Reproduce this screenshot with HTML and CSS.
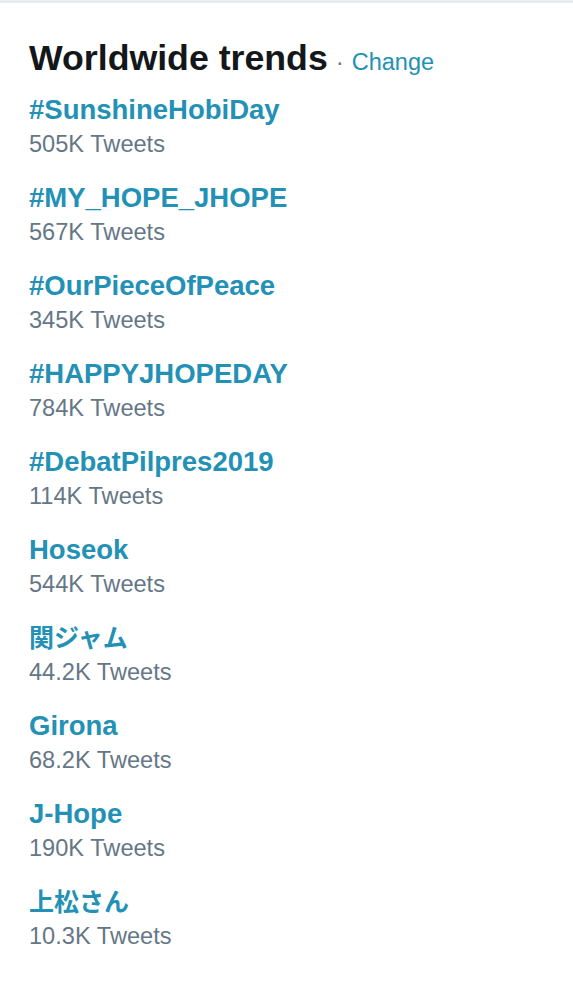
FILE: index.html
```html
<!DOCTYPE html>
<html>
<head>
<meta charset="utf-8">
<link rel="stylesheet" href="styles.css">
</head>
<body>
<div class="topbar"></div>
<section class="trends">
  <h2 class="title">Worldwide trends<span class="sep">·</span><a class="change">Change</a></h2>
  <ul class="list">
    <li class="item"><div class="name">#SunshineHobiDay</div><div class="count">505K Tweets</div></li>
    <li class="item"><div class="name">#MY_HOPE_JHOPE</div><div class="count">567K Tweets</div></li>
    <li class="item"><div class="name">#OurPieceOfPeace</div><div class="count">345K Tweets</div></li>
    <li class="item"><div class="name">#HAPPYJHOPEDAY</div><div class="count">784K Tweets</div></li>
    <li class="item"><div class="name">#DebatPilpres2019</div><div class="count">114K Tweets</div></li>
    <li class="item"><div class="name">Hoseok</div><div class="count">544K Tweets</div></li>
    <li class="item"><div class="name"><span class="jp">関ジャム</span></div><div class="count">44.2K Tweets</div></li>
    <li class="item"><div class="name">Girona</div><div class="count">68.2K Tweets</div></li>
    <li class="item"><div class="name">J-Hope</div><div class="count">190K Tweets</div></li>
    <li class="item"><div class="name"><span class="jp">上松さん</span></div><div class="count">10.3K Tweets</div></li>
  </ul>
</section>
</body>
</html>
```
FILE: styles.css
```css
html, body {
  margin: 0;
  padding: 0;
  background: #ffffff;
}
body {
  font-family: "Liberation Sans", Arial, "Noto Sans CJK JP", sans-serif;
}
.topbar {
  height: 3px;
  background: #e6ecf0;
}
.trends {
  padding: 35px 20px 0 29px;
}
.title {
  margin: 0;
  font-size: 35.7px;
  line-height: 40px;
  font-weight: 700;
  color: #14171a;
  display: flex;
  align-items: baseline;
}
.sep {
  font-size: 24px;
  font-weight: 400;
  color: #657786;
  margin: 0 8px 0 8px;
}
.change {
  font-size: 23.5px;
  font-weight: 400;
  color: #2391b5;
}
.list {
  list-style: none;
  margin: 11px 0 0 0;
  padding: 0;
}
.item {
  padding-bottom: 20px;
}
.name {
  font-size: 27.5px;
  line-height: 34px;
  height: 34px;
  font-weight: 700;
  color: #2391b5;
}
.jp {
  font-family: "Noto Sans CJK JP", sans-serif;
  font-size: 25px;
  line-height: 1;
}
.count {
  font-size: 23.6px;
  line-height: 34px;
  color: #657786;
}
```
